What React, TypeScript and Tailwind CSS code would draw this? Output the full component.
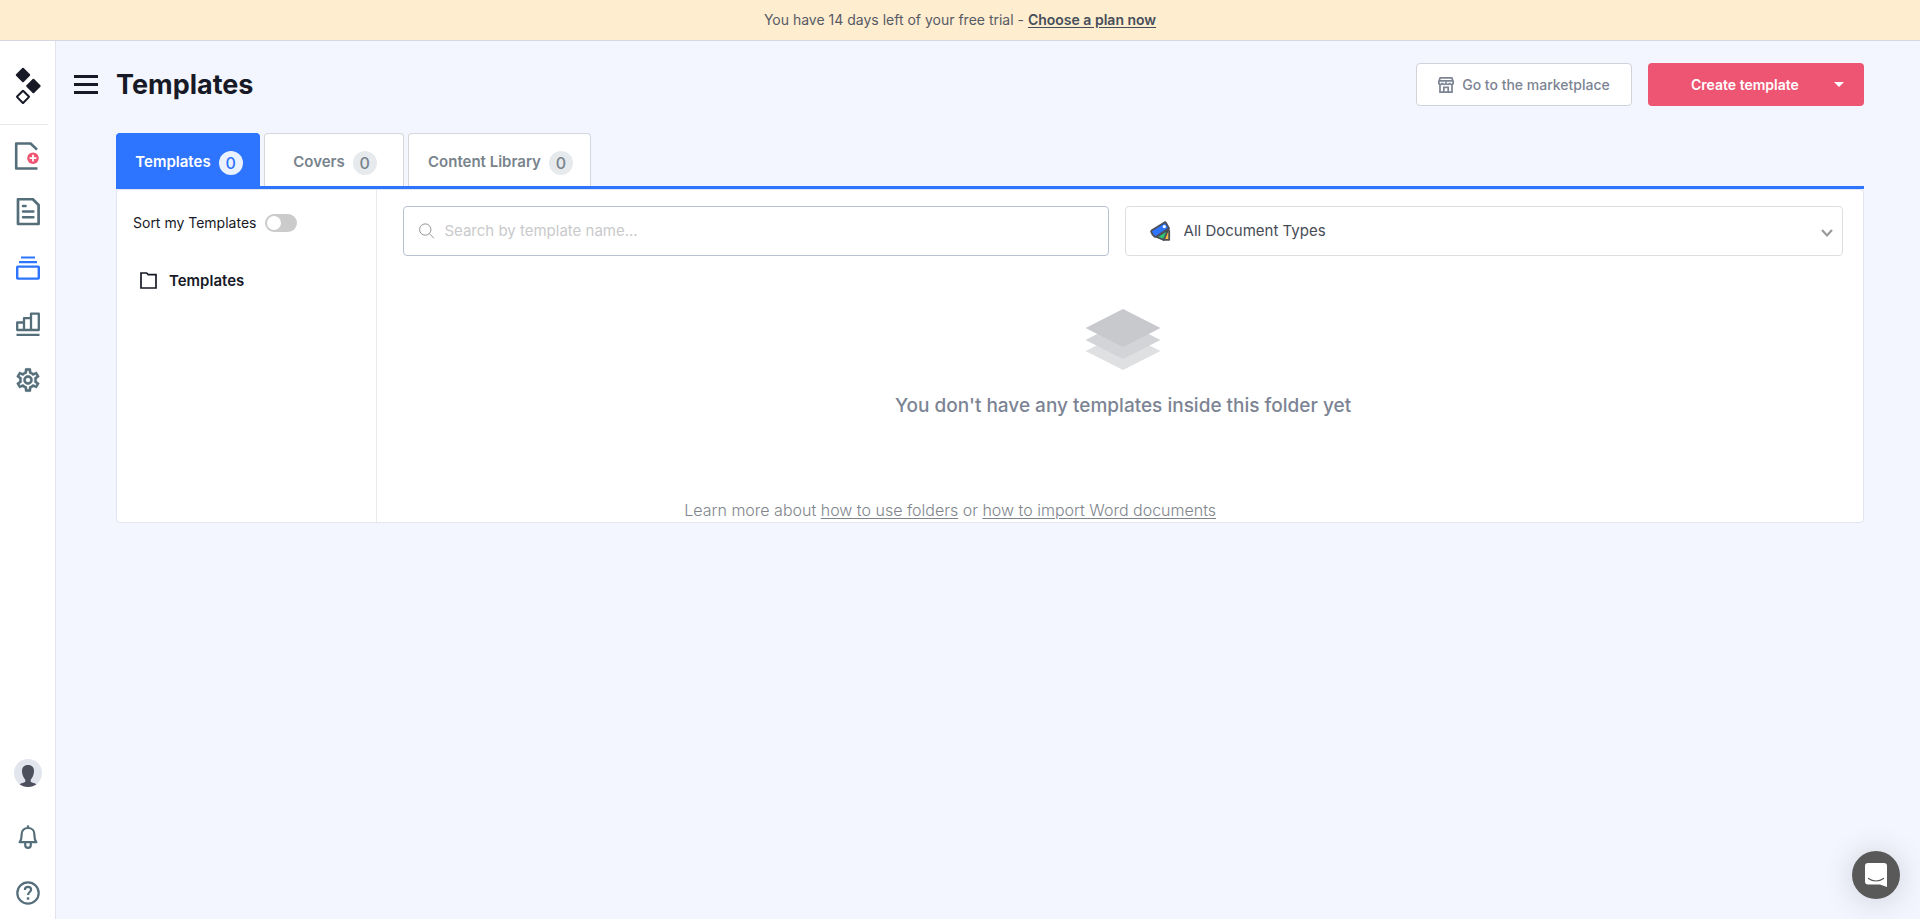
import React from "react";

const railButton = "flex h-7 w-7 items-center justify-center";

function Logo() {
  return (
    <svg width="26" height="38" viewBox="0 0 26 38" aria-hidden="true">
      <g fill="#171a26">
        <rect x="2.6" y="2.6" width="10.8" height="10.8" rx="1" transform="rotate(45 8 8)" />
        <rect x="13" y="13.6" width="10.8" height="10.8" rx="1" transform="rotate(45 18.4 19)" />
      </g>
      <rect x="3.6" y="25.4" width="8.8" height="8.8" rx="0.5" transform="rotate(45 8 29.8)" fill="none" stroke="#171a26" strokeWidth="2" />
    </svg>
  );
}

function AddDocumentIcon() {
  return (
    <svg width="28" height="28" viewBox="0 0 28 28" fill="none" aria-hidden="true">
      <path d="M23.5 26.5H2.2V1.5H16.6L23 7.6" stroke="#546e7a" strokeWidth="2.6" strokeLinejoin="round" />
      <circle cx="19" cy="16.2" r="5.8" fill="#ee5573" />
      <path d="M19 12.8v6.8M15.6 16.2h6.8" stroke="#fff" strokeWidth="1.8" />
    </svg>
  );
}

function DocumentIcon() {
  return (
    <svg width="28" height="28" viewBox="0 0 28 28" fill="none" stroke="#546e7a" aria-hidden="true">
      <path d="M4 1.2H18.8L24.6 7V26H4Z" strokeWidth="2.700" strokeLinejoin="round" />
      <path d="M9 8h2.600M9 13.500h10.400M9 19.200h10.400" strokeWidth="2.500" strokeLinecap="round" />
    </svg>
  );
}

function StackIcon() {
  return (
    <svg width="24" height="24" viewBox="0 0 24 24" fill="none" stroke="#2d74ff" strokeWidth="2.200" aria-hidden="true">
      <path d="M5 1.500h14M3 6.200h18" />
      <rect x="1.2" y="10.600" width="21.6" height="12" rx="0.5" strokeWidth="2.400" />
    </svg>
  );
}

function ChartIcon() {
  return (
    <svg width="24" height="24" viewBox="0 0 24 24" fill="none" stroke="#546e7a" strokeWidth="2.300" aria-hidden="true">
      <path d="M1.200 18V10.500H8V18ZM8 18V6.200H15V18ZM15 18V1.700H22.800V18Z" strokeLinejoin="round" />
      <path d="M0.5 22.900h23" />
    </svg>
  );
}

function GearIcon() {
  return (
    <svg width="28" height="28" viewBox="0 0 24 24" fill="#546e7a" stroke="#546e7a" strokeWidth="0.250" aria-hidden="true">
      <path d="M19.43 12.98c.04-.32.07-.64.07-.98 0-.34-.03-.66-.07-.98l2.11-1.65c.19-.15.24-.42.12-.64l-2-3.46a.5.5 0 0 0-.61-.22l-2.49 1c-.52-.4-1.08-.73-1.69-.98l-.38-2.65A.488.488 0 0 0 14 2h-4c-.25 0-.46.18-.49.42l-.38 2.65c-.61.25-1.17.59-1.69.98l-2.49-1a.5.5 0 0 0-.61.22l-2 3.46c-.13.22-.07.49.12.64l2.11 1.65c-.04.32-.07.65-.07.98 0 .33.03.66.07.98l-2.11 1.65c-.19.15-.24.42-.12.64l2 3.46c.12.22.39.3.61.22l2.49-1c.52.4 1.08.73 1.69.98l.38 2.65c.03.24.24.42.49.42h4c.25 0 .46-.18.49-.42l.38-2.65c.61-.25 1.17-.59 1.69-.98l2.49 1c.23.09.49 0 .61-.22l2-3.46c.12-.22.07-.49-.12-.64l-2.11-1.65Zm-1.98-1.71c.04.31.05.52.05.73 0 .21-.02.43-.05.73l-.14 1.13.89.7 1.08.84-.7 1.21-1.27-.51-1.04-.42-.9.68c-.43.32-.84.56-1.25.73l-1.06.43-.16 1.13-.2 1.35h-1.4l-.19-1.35-.16-1.13-1.06-.43c-.43-.18-.83-.41-1.23-.71l-.91-.7-1.06.43-1.27.51-.7-1.21 1.08-.84.89-.7-.14-1.13A7.6 7.6 0 0 1 6.5 12c0-.2.02-.43.05-.73l.14-1.13-.89-.7-1.08-.84.7-1.21 1.27.51 1.04.42.9-.68c.43-.32.84-.56 1.25-.73l1.06-.43.16-1.13.2-1.35h1.39l.19 1.35.16 1.13 1.06.43c.43.18.83.41 1.23.71l.91.7 1.06-.43 1.27-.51.7 1.21-1.07.85-.89.7.14 1.12ZM12 8a4 4 0 1 0 0 8 4 4 0 0 0 0-8Zm0 6a2 2 0 1 1 0-4 2 2 0 0 1 0 4Z" />
    </svg>
  );
}

function AvatarIcon() {
  return (
    <svg width="28" height="28" viewBox="0 0 28 28" aria-hidden="true">
      <clipPath id="avatar-clip">
        <circle cx="14" cy="14" r="14" />
      </clipPath>
      <g clipPath="url(#avatar-clip)">
        <rect width="28" height="28" fill="#e2e5ee" />
        <path d="M14 6c4 0 6 2.400 6 6 0 3-1 6.200-3.300 8.700v2.100c1.500 1.200 4 1.400 6 2.600v4H5.300v-4c2-1.200 4.500-1.400 6-2.600v-2.100C9 18.200 8 15 8 12c0-3.600 2-6 6-6Z" fill="#4b505c" />
      </g>
    </svg>
  );
}

function BellIcon() {
  return (
    <svg width="20" height="24" viewBox="0 0 20 24" fill="none" stroke="#546e7a" strokeWidth="2.200" aria-hidden="true">
      <path d="M10 0.400v3" />
      <path d="M1.600 17.200c1.400-1.800 2-3.600 2-6.600v-1.400C3.600 5.400 6.200 3 10 3s6.400 2.400 6.400 6.200v1.400c0 3 .6 4.800 2 6.600Z" strokeLinejoin="round" />
      <path d="M7.200 18v2a2.800 2.800 0 0 0 5.600 0v-2" />
    </svg>
  );
}

function HelpIcon() {
  return (
    <svg width="24" height="24" viewBox="0 0 24 24" fill="none" stroke="#546e7a" strokeWidth="2.200" aria-hidden="true">
      <circle cx="12" cy="12" r="10.700" />
      <path d="M8.900 8.900c0-1.900 1.300-3 3.100-3s3.100 1 3.100 2.700c0 2.500-3 2.400-3 5.400" />
      <path d="M10.800 17.500h2.500" strokeWidth="2.400" />
    </svg>
  );
}

function StoreIcon() {
  return (
    <svg width="16" height="16" viewBox="0 0 16 16" fill="none" stroke="#7c8494" strokeWidth="1.700" aria-hidden="true">
      <path d="M2.200 0.800h11.600l1.400 3.800v1.200c0 2.200-3.200 2.200-3.600.2-.6 2-3 2-3.600 0-.6 2-3 2-3.600 0-.4 2-3.600 2-3.600-.2V4.600Z" />
      <path d="M1 3.800h14M2 7.500v7.700h12V7.500M5.800 15v-4.600h4.400V15" />
    </svg>
  );
}

function SwatchIcon() {
  return (
    <svg width="22" height="20" viewBox="0 0 22 20" stroke="#4b4f58" strokeWidth="1.800" strokeLinejoin="round" aria-hidden="true">
      <path d="M13.500 18.800h5.700V10l-1.200-2.500Z" fill="#fbb843" />
      <path d="M6.500 16l7.200 2.800L18.200 8.500Z" fill="#2fc77a" />
      <path d="M1.500 9.600L14.500 1.400Q15.400 1 16 1.900L19 7.200 6.200 15.700Q5.300 16.200 4.500 15.500Q1.800 13.200 1.200 10.800Q1 10 1.500 9.600Z" fill="#2d74ff" />
      <circle cx="14.300" cy="5.600" r="1.600" fill="#fff" stroke="none" />
    </svg>
  );
}

const mainNav = [
  { label: "New document", Icon: AddDocumentIcon },
  { label: "Documents", Icon: DocumentIcon },
  { label: "Templates", Icon: StackIcon },
  { label: "Reports", Icon: ChartIcon },
  { label: "Settings", Icon: GearIcon },
];

function Sidebar() {
  return (
    <nav aria-label="Main" className="flex w-14 shrink-0 flex-col border-r border-[#e1e4ea] bg-white pt-[26px]">
      <a href="#home" aria-label="Home" className="ml-[15px] self-start">
        <Logo />
      </a>
      <div className="mt-[19px] mr-[7px] h-px bg-[#e6e8eb]" />
      <div className="mt-[17px] ml-[14px] flex flex-col gap-7">
        {mainNav.map(({ label, Icon }) => (
          <a key={label} href="#nav" aria-label={label} className={railButton}>
            <Icon />
          </a>
        ))}
      </div>
      <div className="mt-auto mb-3 ml-[14px] flex flex-col gap-7">
        <button aria-label="Account" className={railButton + " mb-2"}>
          <AvatarIcon />
        </button>
        <button aria-label="Notifications" className={railButton}>
          <BellIcon />
        </button>
        <button aria-label="Help" className={railButton}>
          <HelpIcon />
        </button>
      </div>
    </nav>
  );
}

const tabs = [
  { label: "Templates", count: 0, size: "w-36" },
  { label: "Covers", count: 0, size: "w-35" },
  { label: "Content Library", count: 0, size: "w-[183px]" },
];

function Tabs() {
  return (
    <div role="tablist" className="flex gap-1 border-b-3 border-[#2d74ff]">
      {tabs.map((tab, i) => {
        const active = i === 0;
        return (
          <button
            key={tab.label}
            role="tab"
            aria-selected={active}
            className={
              "flex h-[53px] items-center justify-center gap-2 rounded-t border border-b-0 pt-[5px] pl-0.5 text-[15px] font-semibold " +
              tab.size +
              (active ? " border-[#2d74ff] bg-[#2d74ff] text-white" : " border-[#d3d6db] bg-white text-[#78838c]")
            }
          >
            {tab.label}
            <span
              className={
                "flex h-6 w-6 items-center justify-center rounded-full text-base font-medium " +
                (active ? "bg-[#eaf1ff] text-[#2d74ff]" : "bg-[#e6eaec] text-[#78838c]")
              }
            >
              {tab.count}
            </span>
          </button>
        );
      })}
    </div>
  );
}

export default function App() {
  return (
    <div className="flex min-h-screen flex-col bg-[#f3f6ff] font-['Inter',sans-serif] text-[#171a26]">
      <div className="flex h-[41px] items-center justify-center border-b border-[#d5d8e0] bg-[#ffedcf] text-sm text-[#565b66]">
        <p>
          You have 14 days left of your free trial -{" "}
          <a href="#plans" className="font-semibold text-[#464d59] underline underline-offset-2">
            Choose a plan now
          </a>
        </p>
      </div>

      <div className="flex grow">
        <Sidebar />
        <main className="min-w-0 grow pr-14">
          <header className="flex items-center pt-[22px] pl-[18px]">
            <button aria-label="Toggle menu" className="mr-[18px] flex w-6 flex-col gap-[5px]">
              <span className="h-[3px] w-full bg-[#171a26]" />
              <span className="h-[3px] w-full bg-[#171a26]" />
              <span className="h-[3px] w-full bg-[#171a26]" />
            </button>
            <h1 className="text-[27px] leading-10 font-bold">Templates</h1>
            <div className="ml-auto flex gap-4">
              <button className="flex h-[43px] w-[216px] items-center justify-center gap-2 rounded border border-[#d0d3d8] bg-white text-sm font-medium text-[#7c8494]">
                <StoreIcon />
                Go to the marketplace
              </button>
              <button className="flex h-[43px] w-[216px] items-center rounded bg-[#ee5573] pr-5 pl-[43px] text-sm font-semibold text-white">
                <span className="grow text-left">Create template</span>
                <svg width="10" height="5" viewBox="0 0 10 5" aria-hidden="true">
                  <path d="M0 0h10L5 5Z" fill="#fff" />
                </svg>
              </button>
            </div>
          </header>

          <div className="pt-[27px] pl-15">
            <Tabs />
            <div className="flex rounded border border-[#e1e5ee] bg-white">
              <aside className="w-[260px] shrink-0 border-r border-[#e8ebee] pt-[23px] pl-4">
                <label className="flex h-5 items-center gap-[9px] text-sm">
                  Sort my Templates
                  <input
                    type="checkbox"
                    className="flex h-[18px] w-8 appearance-none items-center rounded-full bg-[#cbcbcb] pl-0.5 before:h-[14px] before:w-[14px] before:rounded-full before:bg-white checked:bg-[#2d74ff] checked:before:ml-[14px]"
                  />
                </label>
                <a href="#templates" className="mt-9 ml-[7px] flex h-6 items-center gap-3 text-[15px] font-semibold">
                  <svg width="17" height="19" viewBox="0 0 17 19" fill="none" stroke="#171a26" strokeWidth="1.700" aria-hidden="true">
                    <path d="M1 16V1h5.600l1.600 1.600H16V16Z" />
                  </svg>
                  Templates
                </a>
              </aside>

              <section className="min-w-0 grow pt-4 pr-5 pl-[26px]">
                <div className="flex gap-4">
                  <label className="flex h-[50px] w-[49%] items-center gap-[10px] rounded border border-[#b9c2d3] px-[15px]">
                    <svg width="16" height="16" viewBox="0 0 16 16" fill="none" stroke="#8f8f8f" aria-hidden="true">
                      <circle cx="6.500" cy="6.500" r="5.900" />
                      <path d="M10.800 10.800l4.700 4.700" />
                    </svg>
                    <input
                      type="text"
                      aria-label="Search by template name"
                      placeholder="Search by template name..."
                      className="w-full bg-transparent text-[15px] outline-none placeholder:text-[#c9cacc]"
                    />
                  </label>
                  <div className="relative flex-1">
                    <select
                      aria-label="Document type"
                      className="h-[50px] w-full appearance-none rounded border border-[#dcdee1] bg-white pr-8 pl-[58px] text-[15px] text-[#474c57]"
                    >
                      <option>All Document Types</option>
                    </select>
                    <span className="pointer-events-none absolute top-[15px] left-[25px]">
                      <SwatchIcon />
                    </span>
                    <svg className="pointer-events-none absolute top-[23px] right-[10px]" width="12" height="8" viewBox="0 0 12 8" fill="none" aria-hidden="true">
                      <path d="M1 1l5 5.400L11 1" stroke="#999" strokeWidth="2.200" />
                    </svg>
                  </div>
                </div>

                <div className="flex flex-col items-center pt-[53px]">
                  <svg width="76" height="61" viewBox="0 0 76 61" aria-hidden="true">
                    <path d="M38 23L75.500 42 38 61 0.500 42Z" fill="#dfe0e2" />
                    <path d="M38 12L75.500 31 38 50 0.500 31Z" fill="#d3d4d7" />
                    <path d="M38 0L75.500 19 38 38 0.500 19Z" fill="#c8c9cd" />
                  </svg>
                  <h2 className="mt-5 text-[19px] leading-8 font-medium text-[#7c8494]">
                    You don't have any templates inside this folder yet
                  </h2>
                </div>
                <p className="mt-[76px] w-[76%] text-center text-base leading-6 font-light text-[#80858c]">
                  Learn more about{" "}
                  <a href="#folders" className="underline underline-offset-2">how to use folders</a> or{" "}
                  <a href="#import" className="underline underline-offset-2">how to import Word documents</a>
                </p>
              </section>
            </div>
          </div>
        </main>
      </div>

      <button
        aria-label="Open chat"
        className="fixed right-5 bottom-5 flex h-12 w-12 items-center justify-center rounded-full bg-[#595959] shadow-[0_2px_32px_rgba(0,0,0,0.16)]"
      >
        <svg width="22" height="24" viewBox="0 0 22 24" aria-hidden="true">
          <path d="M3 0h16a3 3 0 0 1 3 3v21l-7-2.500H3a3 3 0 0 1-3-3V3a3 3 0 0 1 3-3Z" fill="#fff" />
          <path d="M3.500 15.500c4.500 3.300 10.500 3.300 15 0" stroke="#595959" strokeWidth="1.200" fill="none" strokeLinecap="round" />
        </svg>
      </button>
    </div>
  );
}
